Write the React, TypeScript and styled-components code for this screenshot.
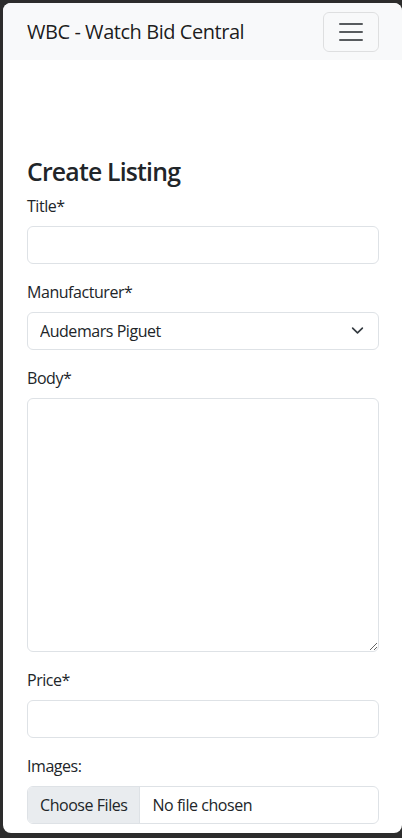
import React from "react";
import styled, { createGlobalStyle } from "styled-components";

const Global = createGlobalStyle`
  html, body { margin: 0; padding: 0; background: #2c2c2c; }
  * { box-sizing: border-box; }
  body { font-family: "Open Sans", "Noto Sans", sans-serif; color: #212529; }
`;

const Frame = styled.div`
  height: 838px;
  padding: 3px 0 5px 3px;
`;

const Window = styled.div`
  height: 100%;
  background: #fff;
  border-radius: 8px;
  overflow: hidden;
  display: flex;
  flex-direction: column;
`;

const Navbar = styled.nav`
  background: #f8f9fa;
  display: flex;
  align-items: center;
  justify-content: space-between;
  padding: 9px 23px 8px 24px;
`;

const Brand = styled.a`
  font-size: 20px;
  line-height: 30px;
  color: rgba(0, 0, 0, 0.9);
  text-decoration: none;
  letter-spacing: -0.45px;
`;

const Toggler = styled.button`
  width: 56px;
  height: 40px;
  padding: 4px 12px;
  background: transparent;
  border: 1px solid rgba(0, 0, 0, 0.1);
  border-radius: 6px;
  display: flex;
  align-items: center;
  justify-content: center;
`;

const Main = styled.main`
  padding: 96px 23px 0 24px;
  display: flex;
  flex-direction: column;
`;

const Heading = styled.h2`
  margin: 0 0 8px;
  font-size: 24.8px;
  line-height: 30px;
  font-weight: 600;
  letter-spacing: -0.8px;
`;

const Field = styled.div<{ $last?: boolean }>`
  display: flex;
  flex-direction: column;
  margin-bottom: ${(p) => (p.$last ? 0 : 16)}px;
`;

const Label = styled.label`
  font-size: 16px;
  line-height: 24px;
  margin-bottom: 8px;
  letter-spacing: -0.45px;
`;

const Input = styled.input`
  height: 38px;
  width: 100%;
  border: 1px solid #dee2e6;
  border-radius: 6px;
  padding: 6px 12px;
  font: inherit;
  font-size: 16px;
  background: #fff;
`;

const SelectWrap = styled.div`
  position: relative;
`;

const Select = styled.select`
  appearance: none;
  height: 38px;
  width: 100%;
  border: 1px solid #dee2e6;
  border-radius: 6px;
  padding: 6px 36px 6px 12px;
  font: inherit;
  font-size: 16px;
  letter-spacing: -0.45px;
  color: #212529;
  background: #fff;
`;

const Chevron = styled.svg`
  position: absolute;
  right: 15px;
  top: 12px;
  width: 13px;
  height: 13px;
  pointer-events: none;
`;

const TextArea = styled.textarea`
  height: 254px;
  width: 100%;
  border: 1px solid #dee2e6;
  border-radius: 6px;
  padding: 6px 12px;
  font: inherit;
  font-size: 16px;
  resize: vertical;
`;

const FileBox = styled.label`
  display: flex;
  height: 38px;
  border: 1px solid #dee2e6;
  border-radius: 6px;
  overflow: hidden;
  font-size: 16px;
  letter-spacing: -0.45px;
  cursor: pointer;
  input { display: none; }
`;

const FileButton = styled.span`
  display: flex;
  align-items: center;
  padding: 0 12px;
  background: #e9ecef;
  border-right: 1px solid #dee2e6;
`;

const FileName = styled.span`
  display: flex;
  align-items: center;
  padding: 0 12px;
`;

export default function App() {
  return (
    <>
      <Global />
      <Frame>
        <Window>
          <Navbar>
            <Brand href="#">WBC - Watch Bid Central</Brand>
            <Toggler aria-label="Toggle navigation">
              <svg width="30" height="30" viewBox="0 0 30 30">
                <path
                  d="M4 7h22M4 15h22M4 23h22"
                  stroke="rgba(33,37,41,0.75)"
                  strokeWidth="2"
                  strokeLinecap="round"
                />
              </svg>
            </Toggler>
          </Navbar>
          <Main>
            <Heading>Create Listing</Heading>
            <Field>
              <Label htmlFor="title">Title*</Label>
              <Input id="title" type="text" />
            </Field>
            <Field>
              <Label htmlFor="man">Manufacturer*</Label>
              <SelectWrap>
                <Select id="man" defaultValue="Audemars Piguet">
                  <option>Audemars Piguet</option>
                  <option>Rolex</option>
                  <option>Omega</option>
                </Select>
                <Chevron viewBox="0 0 16 16">
                  <path
                    d="m2 5 6 6 6-6"
                    fill="none"
                    stroke="#343a40"
                    strokeWidth="2"
                    strokeLinecap="round"
                    strokeLinejoin="round"
                  />
                </Chevron>
              </SelectWrap>
            </Field>
            <Field>
              <Label htmlFor="body">Body*</Label>
              <TextArea id="body" />
            </Field>
            <Field>
              <Label htmlFor="price">Price*</Label>
              <Input id="price" type="text" />
            </Field>
            <Field $last>
              <Label>Images:</Label>
              <FileBox>
                <input type="file" multiple />
                <FileButton>Choose Files</FileButton>
                <FileName>No file chosen</FileName>
              </FileBox>
            </Field>
          </Main>
        </Window>
      </Frame>
    </>
  );
}
